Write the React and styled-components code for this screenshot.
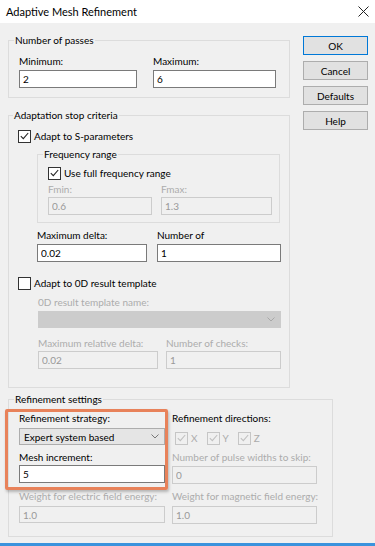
import React from 'react'
import styled, { createGlobalStyle } from 'styled-components'

const GlobalStyle = createGlobalStyle`
  html, body {
    margin: 0;
    padding: 0;
    background: #fff;
  }
  body {
    font-family: Lato, Roboto, sans-serif;
    font-size: 10px;
    color: #000;
  }
  * { box-sizing: border-box; }
`

const Window = styled.div`
  width: 375px;
  height: 546px;
  display: flex;
  flex-direction: column;
  border-bottom: 3px solid #3a93dd;
`

const TitleBar = styled.div`
  height: 23px;
  flex: none;
  display: flex;
  align-items: center;
  justify-content: space-between;
  padding: 0 6px 0 6px;
  background: #fff;
  font-size: 11px;
`

const Body = styled.div`
  flex: 1;
  background: #f0f0f0;
  padding: 9px 7px 0 8px;
`

const TopRow = styled.div`
  display: flex;
  gap: 13px;
`

const LeftCol = styled.div`
  width: 282px;
  display: flex;
  flex-direction: column;
`

const ButtonCol = styled.div`
  width: 65px;
  display: flex;
  flex-direction: column;
  gap: 6px;
  padding-top: 4px;
`

const Button = styled.button`
  height: 19px;
  padding: 0;
  font: inherit;
  color: #000;
  background: #e1e1e1;
  border: 1px solid ${p => (p.$primary ? '#0078d7' : '#adadad')};
`

const Group = styled.fieldset`
  margin: ${p => p.$mt || 0}px 0 0 ${p => p.$ml || 0}px;
  padding: ${p => p.$pad};
  width: ${p => p.$w}px;
  border: 1px solid #dcdcdc;
  min-width: 0;
`

const Legend = styled.legend`
  margin-left: -5px;
  padding: 0 1px;
  line-height: 16px;
`

const Label = styled.div`
  line-height: 16px;
  height: 16px;
  white-space: nowrap;
  color: ${p => (p.$disabled ? '#acacac' : '#000')};
`

const TextBox = styled.input`
  display: block;
  width: 100%;
  height: ${p => p.$h || 18}px;
  margin: ${p => p.$mt || 0}px 0 0 0;
  padding: 0 3px;
  font: inherit;
  outline: none;
  color: ${p => (p.disabled ? '#999' : '#000')};
  background: ${p => (p.disabled ? '#f0f0f0' : '#fff')};
  border: 1px solid ${p => (p.disabled ? '#cccccc' : '#7a7a7a')};
`

const Dropdown = styled.div`
  height: 17px;
  margin-top: ${p => p.$mt || 0}px;
  display: flex;
  align-items: center;
  justify-content: space-between;
  padding: 0 5px 0 4px;
  background: ${p => (p.$disabled ? '#cccccc' : '#e5e5e5')};
  border: 1px solid ${p => (p.$disabled ? '#cccccc' : '#adadad')};
  color: #000;
`

const FieldPair = styled.div`
  display: grid;
  grid-template-columns: ${p => p.$cols};
  column-gap: ${p => p.$gap}px;
  margin: ${p => p.$mt || 0}px 0 0 ${p => p.$ml || 0}px;
`

const Indent = styled.div`
  margin-left: ${p => p.$ml}px;
  width: ${p => p.$w}px;
`

const CheckRow = styled.label`
  display: flex;
  align-items: center;
  gap: 3px;
  height: 16px;
  margin-top: ${p => p.$mt || 0}px;
  color: ${p => (p.$disabled ? '#acacac' : '#000')};
`

const Box = styled.span`
  width: 13px;
  height: 13px;
  flex: none;
  display: flex;
  align-items: center;
  justify-content: center;
  background: ${p => (p.$disabled ? '#f0f0f0' : '#fff')};
  border: 1px solid ${p => (p.$disabled ? '#c6c6c6' : '#333')};
`

const AxisRow = styled.div`
  display: flex;
  gap: 9px;
  height: 16px;
  margin-top: 4px;
  padding-left: 3px;
`

const RefineGrid = styled.div`
  display: grid;
  grid-template-columns: 146px 145px;
  column-gap: 7px;
`

const Highlight = styled.div`
  position: relative;
  &::before {
    content: '';
    position: absolute;
    top: -1px;
    left: -14px;
    right: -3px;
    bottom: -6px;
    border: 3px solid #e8825a;
    border-radius: 2px;
    box-shadow: 1px 2px 3px rgba(0, 0, 0, 0.25);
    pointer-events: none;
  }
`

const Stack = styled.div`
  display: flex;
  flex-direction: column;
`

const Check = ({ checked, disabled }) => (
  <Box $disabled={disabled}>
    {checked && (
      <svg width="9" height="8" viewBox="0 0 9 8">
        <path d="M0.8 4.2 L3.3 6.6 L8.2 1" fill="none" stroke={disabled ? '#c0c0c0' : '#222'} strokeWidth="1.1" />
      </svg>
    )}
  </Box>
)

const Chevron = ({ color }) => (
  <svg width="8" height="5" viewBox="0 0 8 5">
    <path d="M0.5 0.5 L4 4 L7.5 0.5" fill="none" stroke={color} strokeWidth="1" />
  </svg>
)

const Close = () => (
  <svg width="11" height="11" viewBox="0 0 11 11">
    <path d="M0.5 0.5 L10.5 10.5 M10.5 0.5 L0.5 10.5" stroke="#222" strokeWidth="1" />
  </svg>
)

const Field = ({ label, value, disabled, mt }) => (
  <div>
    <Label $disabled={disabled}>{label}</Label>
    <TextBox readOnly disabled={disabled} defaultValue={value} $mt={mt} />
  </div>
)

export default function App() {
  return (
    <Window>
      <GlobalStyle />
      <TitleBar>
        <span>Adaptive Mesh Refinement</span>
        <Close />
      </TitleBar>
      <Body>
        <TopRow>
          <LeftCol>
            <Group $pad="5px 12px 9px 10px" $w={282}>
              <Legend>Number of passes</Legend>
              <FieldPair $cols="118px 123px" $gap={16}>
                <Field label="Minimum:" value="2" mt={1} />
                <Field label="Maximum:" value="6" mt={1} />
              </FieldPair>
            </Group>

            <Group $mt={9} $pad="5px 8px 18px 9px" $w={282}>
              <Legend>Adaptation stop criteria</Legend>
              <CheckRow>
                <Check checked />
                Adapt to S-parameters
              </CheckRow>
              <Indent $ml={19} $w={244}>
                <Group $mt={2} $pad="3px 7px 7px 10px" $w={243}>
                  <Legend>Frequency range</Legend>
                  <CheckRow>
                    <Check checked />
                    Use full frequency range
                  </CheckRow>
                  <FieldPair $cols="104px 111px" $gap={9}>
                    <Field label="Fmin:" value="0.6" disabled />
                    <Field label="Fmax:" value="1.3" disabled />
                  </FieldPair>
                </Group>
                <FieldPair $cols="110px 124px" $gap={10} $mt={4}>
                  <Field label="Maximum delta:" value="0.02" mt={1} />
                  <Field label="Number of" value="1" mt={1} />
                </FieldPair>
              </Indent>
              <CheckRow $mt={13}>
                <Check />
                Adapt to 0D result template
              </CheckRow>
              <Indent $ml={20} $w={243}>
                <Label $disabled style={{ marginTop: 3 }}>0D result template name:</Label>
                <Dropdown $disabled $mt={1}>
                  <span />
                  <Chevron color="#a8a8a8" />
                </Dropdown>
                <FieldPair $cols="120px 115px" $gap={8} $mt={7}>
                  <Field label="Maximum relative delta:" value="0.02" disabled />
                  <Field label="Number of checks:" value="1" disabled />
                </FieldPair>
              </Indent>
            </Group>
          </LeftCol>

          <ButtonCol>
            <Button $primary>OK</Button>
            <Button>Cancel</Button>
            <Button>Defaults</Button>
            <Button>Help</Button>
          </ButtonCol>
        </TopRow>

        <Group $mt={3} $pad="3px 10px 12px 10px" $w={325}>
          <Legend>Refinement settings</Legend>
          <RefineGrid>
            <Highlight>
              <Label>Refinement strategy:</Label>
              <Dropdown $mt={2}>
                <span>Expert system based</span>
                <Chevron color="#777" />
              </Dropdown>
              <Stack style={{ marginTop: 4 }}>
                <Label>Mesh increment:</Label>
                <TextBox readOnly defaultValue="5" />
              </Stack>
            </Highlight>
            <Stack>
              <Label>Refinement directions:</Label>
              <AxisRow>
                <CheckRow $disabled>
                  <Check checked disabled />X
                </CheckRow>
                <CheckRow $disabled>
                  <Check checked disabled />Y
                </CheckRow>
                <CheckRow $disabled>
                  <Check checked disabled />Z
                </CheckRow>
              </AxisRow>
              <Stack style={{ marginTop: 3 }}>
                <Label $disabled>Number of pulse widths to skip:</Label>
                <TextBox readOnly disabled defaultValue="0" $mt={1} />
              </Stack>
            </Stack>
            <Stack style={{ marginTop: 4 }}>
              <Label $disabled>Weight for electric field energy:</Label>
              <TextBox readOnly disabled defaultValue="1.0" $mt={2} $h={17} />
            </Stack>
            <Stack style={{ marginTop: 4 }}>
              <Label $disabled>Weight for magnetic field energy:</Label>
              <TextBox readOnly disabled defaultValue="1.0" $mt={2} />
            </Stack>
          </RefineGrid>
        </Group>
      </Body>
    </Window>
  )
}
